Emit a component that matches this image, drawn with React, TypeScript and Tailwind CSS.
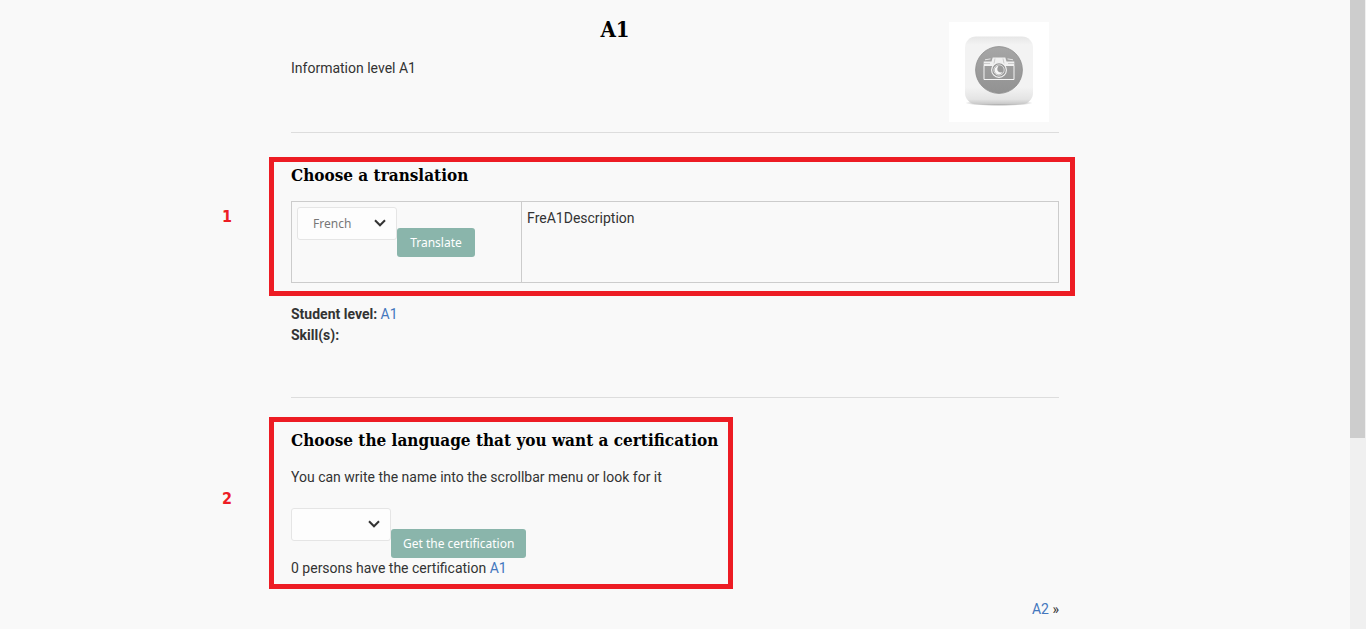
import React, { useState } from "react";

const headingFont =
  "font-['Roboto_Slab','DejaVu_Serif_Condensed','DejaVu_Serif',serif] font-bold text-black";
const controlFont = "font-['Noto_Sans',sans-serif] text-xs";
const linkStyle = "text-[#4477bd] hover:underline";

function CameraPicture() {
  return (
    <svg className="size-[100px] bg-white" viewBox="0 0 100 100" role="img" aria-label="Camera">
      <defs>
        <linearGradient id="tile" x1="0" y1="0" x2="0" y2="1">
          <stop offset="0" stopColor="#e6e6e6" />
          <stop offset="0.12" stopColor="#f3f3f3" />
          <stop offset="0.75" stopColor="#f3f3f3" />
          <stop offset="0.93" stopColor="#e4e4e4" />
          <stop offset="1" stopColor="#c8c8c8" />
        </linearGradient>
        <linearGradient id="disc" x1="0" y1="0" x2="0" y2="1">
          <stop offset="0" stopColor="#a6a6a6" />
          <stop offset="1" stopColor="#929292" />
        </linearGradient>
        <radialGradient id="shade">
          <stop offset="0" stopColor="#8a8a8a" />
          <stop offset="0.7" stopColor="#c4c4c4" />
          <stop offset="1" stopColor="#ffffff" />
        </radialGradient>
      </defs>
      <ellipse cx="50" cy="81" rx="34" ry="3" fill="url(#shade)" />
      <rect x="16" y="14.5" width="68" height="67.5" rx="11" fill="url(#tile)" />
      <circle cx="50" cy="48" r="23.4" fill="url(#disc)" stroke="#8c8c8c" strokeWidth="0.8" />
      <path d="M35 43.500h30V57.5H35z" fill="none" stroke="#f4f4f4" />
      <path d="M34.700 39.5h7.8l1.2-4h12.6l1.2 4h7.8v4H34.7z" fill="#f0f0f0" />
      <path d="M36 37.800l5.500-.9M64 37.800l-5.500-.9" stroke="#e6e6e6" strokeWidth="1" />
      <path d="M46 36.500l-1 5M54 36.500l1 5M35 41.500h6M59 41.500h6" stroke="#b4b4b4" strokeWidth="0.6" />
      <circle cx="50" cy="48" r="7.4" fill="#969696" stroke="#f4f4f4" strokeWidth="1.1" />
      <circle cx="50" cy="48" r="5.2" fill="#9b9b9b" stroke="#e9e9e9" strokeWidth="0.8" />
      <path d="M49.500 43.700a4.400 4.400 0 1 0 4.200 6.600c-3.200.7-5.800-1.100-5.400-3.600.2-1.200.7-2 1.200-3z" fill="#f7f7f7" />
    </svg>
  );
}

type LanguageSelectProps = { label: string; initial: string };

function LanguageSelect({ label, initial }: LanguageSelectProps) {
  const [value, setValue] = useState(initial);
  return (
    <div className="relative w-[100px]">
      <select
        aria-label={label}
        value={value}
        onChange={(e) => setValue(e.target.value)}
        className={`${controlFont} block h-[33px] w-full appearance-none rounded-[3px] border border-[#e5e5e5] bg-[#fdfdfd] pr-7 pl-[15px] text-[#777777]`}
      >
        <option value=""></option>
        <option value="fr">French</option>
        <option value="en">English</option>
      </select>
      <svg
        className="pointer-events-none absolute top-3 right-[11px] h-2 w-3"
        viewBox="0 0 12 8"
        fill="none"
        stroke="#333333"
        strokeWidth="2"
        aria-hidden="true"
      >
        <path d="M1 1.300l5 5 5-5" />
      </svg>
    </div>
  );
}

function ActionButton({ children }: { children: React.ReactNode }) {
  return (
    <button
      type="button"
      className={`${controlFont} mt-[21px] h-[29px] min-w-[78px] rounded-[3px] bg-[#8ab5ab] px-3 pt-px whitespace-nowrap text-white`}
    >
      {children}
    </button>
  );
}

function StepNumber({ children }: { children: React.ReactNode }) {
  return (
    <span className="absolute right-full mr-[42px] font-['DejaVu_Sans_Condensed','DejaVu_Sans',sans-serif] text-base leading-6 font-bold text-[#ed1c24]">
      {children}
    </span>
  );
}

export default function App() {
  return (
    <div className="flex min-h-screen bg-[#f9f9f9] font-['Roboto',sans-serif] text-sm leading-[21px] text-[#333333]">
      <div className="min-w-0 flex-1">
        <main className="mx-auto max-w-[768px] pt-3">
          <header className="flex border-b border-[#dddddd]">
            <div className="flex-1">
              <h1 className={`${headingFont} text-center text-[22px] leading-[34px]`}>A1</h1>
              <p className="mt-3">Information level A1</p>
            </div>
            <div className="p-[10px]">
              <CameraPicture />
            </div>
          </header>

          <section className="relative mt-6 -mr-4 -ml-[22px] border-[5px] border-[#ed1c24] pr-[11px] pb-2 pl-[17px]">
            <div className="absolute inset-y-0 left-0 flex items-center pb-5">
              <StepNumber>1</StepNumber>
            </div>
            <h2 className={`${headingFont} text-[17px] leading-[26px]`}>Choose a translation</h2>
            <table className="mt-[13px] w-full table-fixed border-collapse">
              <tbody>
                <tr className="h-[81px] align-top">
                  <td className="w-[30%] border border-[#cccccc] p-[5px]">
                    <div className="flex">
                      <LanguageSelect label="Translation language" initial="fr" />
                      <ActionButton>Translate</ActionButton>
                    </div>
                  </td>
                  <td className="border border-[#cccccc] px-[5px] py-[6px]">FreA1Description</td>
                </tr>
              </tbody>
            </table>
          </section>

          <div className="mt-2 border-b border-[#dddddd] pb-[51px]">
            <p>
              <strong>Student level:</strong>{" "}
              <a href="#level" className={linkStyle}>
                A1
              </a>
            </p>
            <p>
              <strong>Skill(s):</strong>
            </p>
          </div>

          <section className="relative mt-[19px] -ml-[22px] w-[464px] border-[5px] border-[#ed1c24] py-[5px] pl-[17px]">
            <div className="absolute inset-y-0 left-0 flex items-center pb-2">
              <StepNumber>2</StepNumber>
            </div>
            <h2 className={`${headingFont} text-[17px] leading-[26px] whitespace-nowrap`}>
              Choose the language that you want a certification
            </h2>
            <p className="mt-[14px]">You can write the name into the scrollbar menu or look for it</p>
            <div className="mt-5 flex">
              <LanguageSelect label="Certification language" initial="" />
              <ActionButton>Get the certification</ActionButton>
            </div>
            <p>
              0 persons have the certification{" "}
              <a href="#certification-level" className={linkStyle}>
                A1
              </a>
            </p>
          </section>

          <nav className="mt-[10px] text-right">
            <a href="#next" className={linkStyle}>
              A2
            </a>{" "}
            <span>»</span>
          </nav>
        </main>
      </div>
      <div className="w-4 bg-[#f0f0f0] pr-px" aria-hidden="true">
        <div className="h-[438px] bg-[#cdcdcd]" />
      </div>
    </div>
  );
}
